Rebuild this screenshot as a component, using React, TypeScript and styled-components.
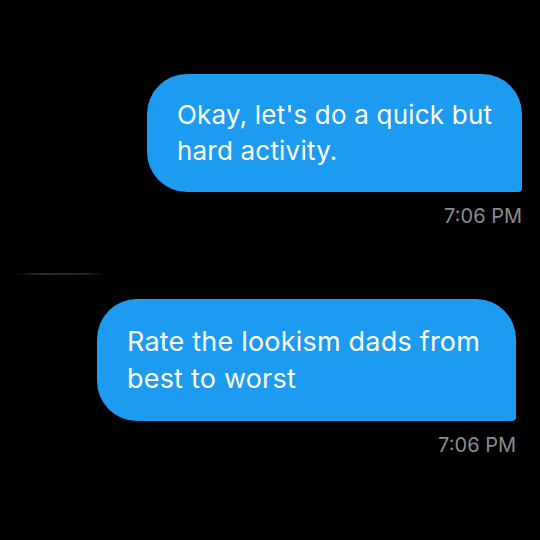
import React from 'react';
import styled, { createGlobalStyle } from 'styled-components';

const GlobalStyle = createGlobalStyle`
  html, body {
    margin: 0;
    padding: 0;
    background: #000000;
  }
  body {
    font-family: Inter, "Liberation Sans", Arial, sans-serif;
    -webkit-font-smoothing: antialiased;
  }
`;

const Screen = styled.div`
  width: 540px;
  height: 540px;
  background: #000000;
  overflow: hidden;
  display: flex;
  flex-direction: column;
  padding-top: 74px;
  box-sizing: border-box;
`;

const Message = styled.div<{ $inset: number }>`
  display: flex;
  flex-direction: column;
  align-items: flex-end;
  padding-right: ${(p) => p.$inset}px;
`;

const Bubble = styled.div<{ $width: number; $size: number }>`
  width: ${(p) => p.$width}px;
  box-sizing: border-box;
  background: #1d9bf0;
  color: #ffffff;
  font-size: ${(p) => p.$size}px;
  letter-spacing: 0.2px;
  line-height: ${(p) => p.$size + 10}px;
  padding: ${(p) => (p.$size > 26 ? 24 : 23)}px 12px ${(p) => (p.$size > 26 ? 24 : 23)}px 30px;
  border-radius: 40px 40px 4px 40px;
`;

const Time = styled.div`
  margin-top: 13px;
  color: #8b8b8e;
  font-size: 20px;
  line-height: 22px;
`;

const Divider = styled.div`
  margin: 46px 0 24px 14px;
  width: 90px;
  height: 2px;
  background: linear-gradient(90deg, rgba(80, 80, 80, 0) 0%, #2c2c2c 30%, #222222 80%, rgba(40, 40, 40, 0) 100%);
`;

const messages = [
  { text: "Okay, let's do a quick but hard activity.", time: '7:06 PM', width: 375, inset: 18, size: 26 },
  { text: 'Rate the lookism dads from best to worst', time: '7:06 PM', width: 419, inset: 24, size: 27 },
];

export default function App() {
  return (
    <>
      <GlobalStyle />
      <Screen>
        {messages.map((m, i) => (
          <React.Fragment key={i}>
            {i > 0 && <Divider />}
            <Message $inset={m.inset}>
              <Bubble $width={m.width} $size={m.size}>{m.text}</Bubble>
              <Time>{m.time}</Time>
            </Message>
          </React.Fragment>
        ))}
      </Screen>
    </>
  );
}
